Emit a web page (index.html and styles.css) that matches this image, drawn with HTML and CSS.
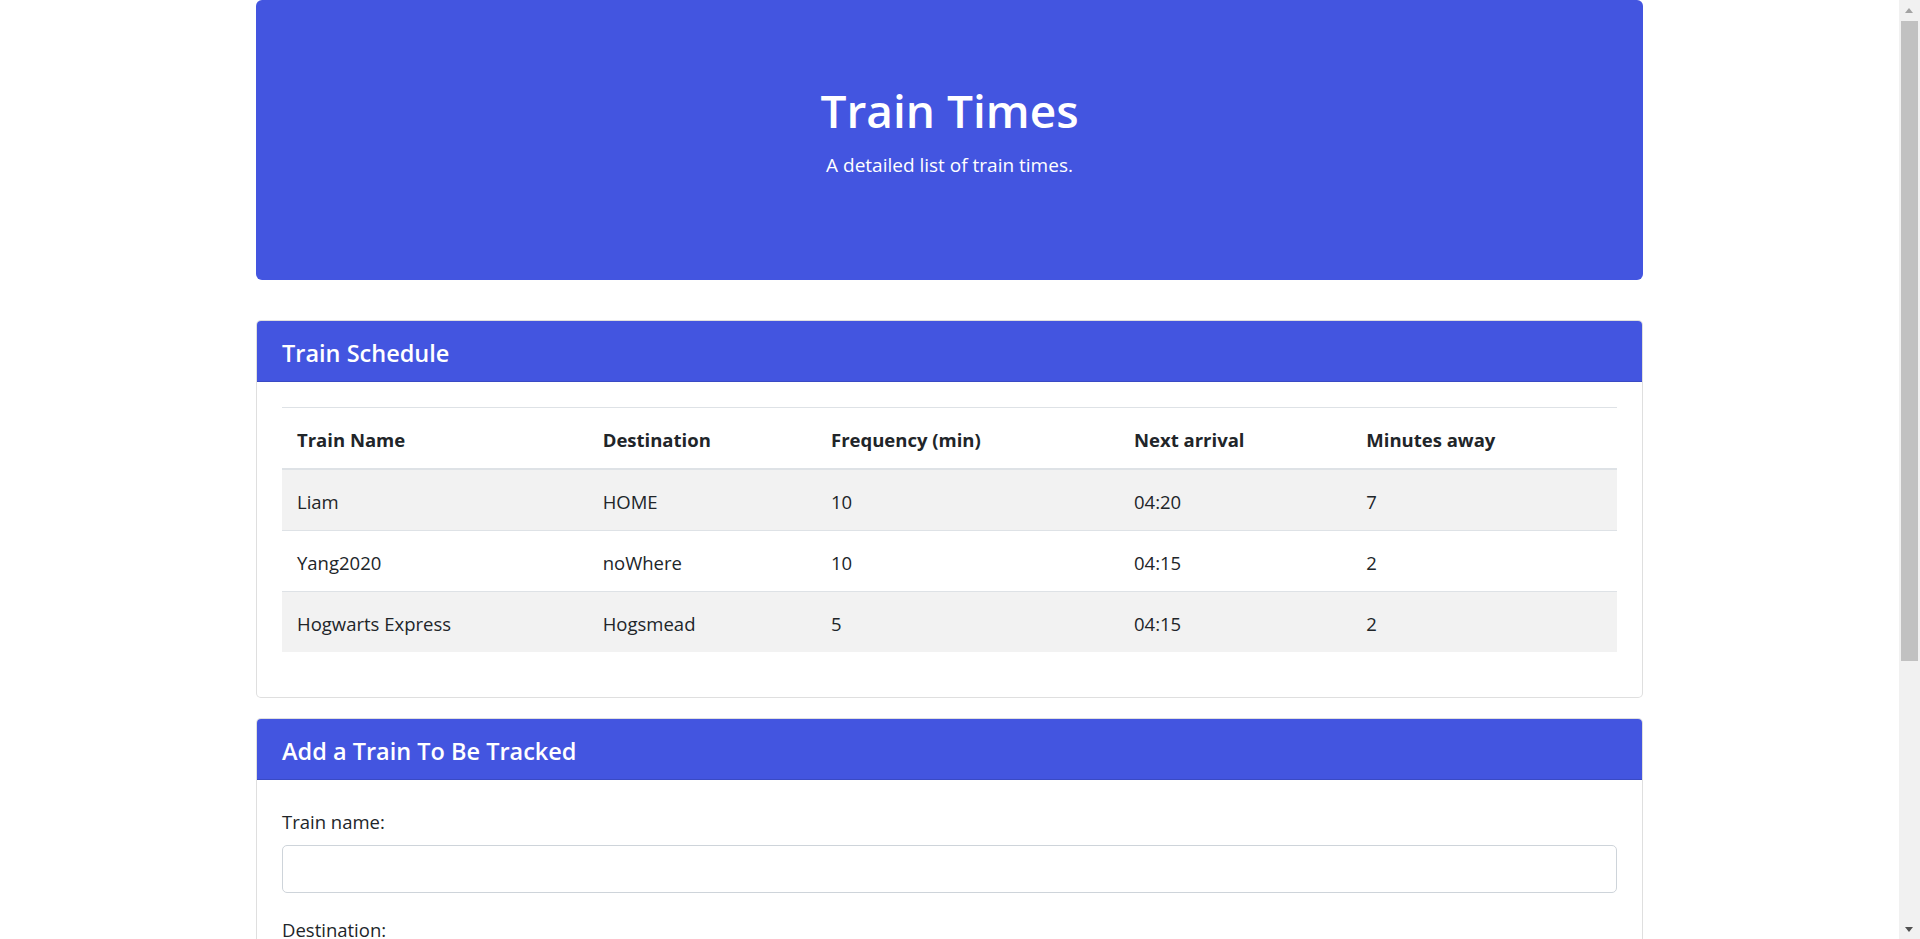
FILE: index.html
```html
<!DOCTYPE html>
<html lang="en">
<head>
<meta charset="utf-8">
<title>Train Times</title>
<link rel="stylesheet" href="styles.css">
</head>
<body>
<div class="container">
  <header class="jumbotron">
    <h1 class="jumbo-title">Train Times</h1>
    <p class="jumbo-sub">A detailed list of train times.</p>
  </header>

  <section class="card">
    <div class="card-header">
      <h5 class="card-title">Train Schedule</h5>
    </div>
    <div class="card-body">
      <table class="table">
        <colgroup>
          <col class="col-name">
          <col class="col-dest">
          <col class="col-freq">
          <col class="col-next">
          <col class="col-away">
        </colgroup>
        <thead>
          <tr>
            <th>Train Name</th>
            <th>Destination</th>
            <th>Frequency (min)</th>
            <th>Next arrival</th>
            <th>Minutes away</th>
          </tr>
        </thead>
        <tbody>
          <tr class="striped">
            <td>Liam</td><td>HOME</td><td>10</td><td>04:20</td><td>7</td>
          </tr>
          <tr>
            <td>Yang2020</td><td>noWhere</td><td>10</td><td>04:15</td><td>2</td>
          </tr>
          <tr class="striped">
            <td>Hogwarts Express</td><td>Hogsmead</td><td>5</td><td>04:15</td><td>2</td>
          </tr>
        </tbody>
      </table>
    </div>
  </section>

  <section class="card">
    <div class="card-header">
      <h5 class="card-title">Add a Train To Be Tracked</h5>
    </div>
    <div class="card-body">
      <form class="train-form">
        <div class="form-group">
          <label class="form-label" for="train-name">Train name:</label>
          <input class="form-control" id="train-name" type="text">
        </div>
        <div class="form-group">
          <label class="form-label" for="destination">Destination:</label>
          <input class="form-control" id="destination" type="text">
        </div>
        <div class="form-group">
          <label class="form-label" for="first-time">First Train Time (HH:mm - military time):</label>
          <input class="form-control" id="first-time" type="text">
        </div>
        <div class="form-group">
          <label class="form-label" for="frequency">Frequency (min):</label>
          <input class="form-control" id="frequency" type="text">
        </div>
        <button class="btn" type="submit">Submit</button>
      </form>
    </div>
  </section>
</div>

<div class="scrollbar" aria-hidden="true">
  <span class="scroll-arrow scroll-up"></span>
  <span class="scroll-thumb"></span>
  <span class="scroll-arrow scroll-down"></span>
</div>
</body>
</html>
```

FILE: styles.css
```css
* {
  box-sizing: border-box;
}

html, body {
  margin: 0;
  padding: 0;
}

body {
  font-family: "Open Sans", "Noto Sans", sans-serif;
  font-size: 20px;
  line-height: 30px;
  color: #212529;
  background: #ffffff;
  padding-right: 21px;
}

.container {
  width: 1387px;
  margin: 0 auto;
  padding-bottom: 20px;
}

.jumbotron {
  background: #4355e0;
  color: #ffffff;
  text-align: center;
  padding: 80px 40px;
  border-radius: 6px;
  margin-bottom: 40px;
}

.jumbo-title {
  margin: 0 0 10px;
  font-size: 46px;
  line-height: 60px;
  font-weight: 600;
}

.jumbo-sub {
  margin: 0 0 20px;
  font-size: 19px;
  line-height: 30px;
}

.card {
  border: 1.25px solid rgba(0, 0, 0, 0.125);
  border-radius: 5px;
  margin-bottom: 20px;
  background: #ffffff;
  overflow: hidden;
}

.card-header {
  background: #4355e0;
  color: #ffffff;
  padding: 17px 25px 13px;
  border-bottom: 1.25px solid rgba(0, 0, 0, 0.125);
}

.card-title {
  margin: 0;
  font-size: 23.5px;
  line-height: 30px;
  font-weight: 600;
}

.card-body {
  padding: 25px;
}

.table {
  width: 100%;
  border-collapse: collapse;
  table-layout: fixed;
  margin-bottom: 20px;
}

.col-name { width: 22.9%; }
.col-dest { width: 17.1%; }
.col-freq { width: 22.7%; }
.col-next { width: 17.4%; }
.col-away { width: 19.9%; }

.table th,
.table td {
  text-align: left;
  padding: 17px 15px 13px;
  border-top: 1.25px solid #dee2e6;
  font-size: 18.5px;
  line-height: 30px;
  vertical-align: top;
}

.table th {
  font-weight: 700;
}

.table thead th {
  border-bottom: 2.5px solid #dee2e6;
}

.table .striped {
  background: #f2f2f2;
}

.form-group {
  margin-bottom: 20px;
}

.form-label {
  display: inline-block;
  padding-top: 2px;
  margin-bottom: 8px;
  font-size: 18.5px;
}

.form-control {
  display: block;
  width: 100%;
  height: 47.5px;
  padding: 7.5px 15px;
  font: inherit;
  color: #495057;
  border: 1.25px solid #ced4da;
  border-radius: 5px;
  background: #ffffff;
}

.btn {
  font: inherit;
  color: #ffffff;
  background: #4355e0;
  border: 1.25px solid #4355e0;
  border-radius: 5px;
  padding: 7.5px 15px;
  line-height: 30px;
}

/* drawn window scrollbar, overlaying the right edge */
.scrollbar {
  position: fixed;
  top: 0;
  right: 0;
  width: 21px;
  height: 100vh;
  background: #f1f1f1;
}

.scroll-thumb {
  position: absolute;
  top: 21px;
  left: 2px;
  width: 17px;
  height: 640px;
  background: #c1c1c1;
}

.scroll-arrow {
  position: absolute;
  left: 6px;
  width: 0;
  height: 0;
  border-left: 4.5px solid transparent;
  border-right: 4.5px solid transparent;
}

.scroll-up {
  top: 8px;
  border-bottom: 5px solid #a3a3a3;
}

.scroll-down {
  bottom: 7px;
  border-top: 5px solid #505050;
}
```
